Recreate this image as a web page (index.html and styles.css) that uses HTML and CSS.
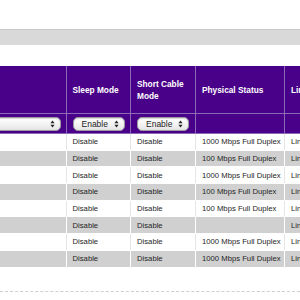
FILE: index.html
```html
<!DOCTYPE html>
<html>
<head>
<meta charset="utf-8">
<link rel="stylesheet" href="styles.css">
</head>
<body>
<div class="toolbar"></div>
<div class="viewport">
<table class="ports">
  <thead>
    <tr class="head-titles">
      <th class="c1"></th>
      <th class="c2">Sleep Mode</th>
      <th class="c3">Short Cable<br>Mode</th>
      <th class="c4">Physical Status</th>
      <th class="c5">Link Status</th>
    </tr>
    <tr class="head-controls">
      <th class="c1"><span class="sel wide"><span class="sel-text"></span><svg class="arr" width="5" height="8" viewBox="0 0 5 8"><path d="M2.5 0.5 L4.6 3.2 L0.4 3.2 Z M2.5 7.5 L4.6 4.8 L0.4 4.8 Z" fill="#222"/></svg></span></th>
      <th class="c2"><span class="sel"><span class="sel-text">Enable</span><svg class="arr" width="5" height="8" viewBox="0 0 5 8"><path d="M2.5 0.5 L4.6 3.2 L0.4 3.2 Z M2.5 7.5 L4.6 4.8 L0.4 4.8 Z" fill="#222"/></svg></span></th>
      <th class="c3"><span class="sel"><span class="sel-text">Enable</span><svg class="arr" width="5" height="8" viewBox="0 0 5 8"><path d="M2.5 0.5 L4.6 3.2 L0.4 3.2 Z M2.5 7.5 L4.6 4.8 L0.4 4.8 Z" fill="#222"/></svg></span></th>
      <th class="c4"></th>
      <th class="c5"></th>
    </tr>
  </thead>
  <tbody>
    <tr class="odd"><td></td><td>Disable</td><td>Disable</td><td>1000 Mbps Full Duplex</td><td>Link Up</td></tr>
    <tr class="even"><td></td><td>Disable</td><td>Disable</td><td>100 Mbps Full Duplex</td><td>Link Up</td></tr>
    <tr class="odd"><td></td><td>Disable</td><td>Disable</td><td>1000 Mbps Full Duplex</td><td>Link Up</td></tr>
    <tr class="even"><td></td><td>Disable</td><td>Disable</td><td>100 Mbps Full Duplex</td><td>Link Up</td></tr>
    <tr class="odd"><td></td><td>Disable</td><td>Disable</td><td>100 Mbps Full Duplex</td><td>Link Up</td></tr>
    <tr class="even"><td></td><td>Disable</td><td>Disable</td><td></td><td>Link Down</td></tr>
    <tr class="odd"><td></td><td>Disable</td><td>Disable</td><td>1000 Mbps Full Duplex</td><td>Link Up</td></tr>
    <tr class="even"><td></td><td>Disable</td><td>Disable</td><td>1000 Mbps Full Duplex</td><td>Link Up</td></tr>
  </tbody>
</table>
</div>
<div class="footer-rule"></div>
</body>
</html>
```

FILE: styles.css
```css
html, body {
  margin: 0;
  padding: 0;
  background: #ffffff;
  font-family: "Liberation Sans", Arial, sans-serif;
}
body {
  width: 300px;
  height: 300px;
  overflow: hidden;
}
.toolbar {
  margin-top: 29px;
  height: 15px;
  background: #d9d9d9;
  border-top: 1px solid #c9c9c9;
}
.viewport {
  margin-top: 21px;
  width: 300px;
  overflow: hidden;
}
.ports {
  margin-left: -100px;
  border-collapse: collapse;
  table-layout: fixed;
  width: 480px;
}
.ports th, .ports td {
  padding: 0 0 0 6px;
  text-align: left;
  overflow: hidden;
  white-space: nowrap;
}
.c1 { width: 158.5px; }
.c2 { width: 57.5px; }
.c3 { width: 58px; }
.c4 { width: 82px; }
.c5 { width: 89px; }
.ports thead th {
  background: #4a0189;
  color: #ffffff;
  font-weight: bold;
  font-size: 8.3px;
  line-height: 12px;
  border-left: 1px solid #8b6bb7;
  border-bottom: 1px solid #8b6bb7;
  vertical-align: middle;
}
.head-titles th {
  height: 47px;
}
.head-controls th {
  height: 19px;
  padding-left: 6px;
}
.head-controls th.c1 {
  padding-left: 0;
  text-align: right;
  padding-right: 6px;
}
.sel {
  display: inline-flex;
  align-items: center;
  justify-content: space-between;
  box-sizing: border-box;
  width: 52px;
  height: 14px;
  padding: 0 5px 0 6px;
  background: linear-gradient(#ffffff, #f1f1f1 60%, #e4e4e4);
  border: 1px solid #9a9a9a;
  border-radius: 5px;
  box-shadow: inset 0 1px 1px rgba(0,0,0,0.15);
  vertical-align: middle;
}
.sel.wide {
  width: 160px;
}
.sel-text {
  color: #222222;
  font-weight: normal;
  font-size: 8.5px;
  line-height: 12px;
  padding-left: 2px;
}
.arr {
  display: block;
}
.ports td {
  height: 15.7px;
  font-size: 7.7px;
  color: #1e1e1e;
  border-left: 1px solid #ffffff;
  border-bottom: 1px solid #ffffff;
  vertical-align: middle;
}
.odd td {
  background: #ffffff;
  border-left-color: #e6e6e6;
}
.even td {
  background: #d0d0d0;
}
.footer-rule {
  margin-top: 23px;
  border-top: 1px dashed #cfcfcf;
}
```
